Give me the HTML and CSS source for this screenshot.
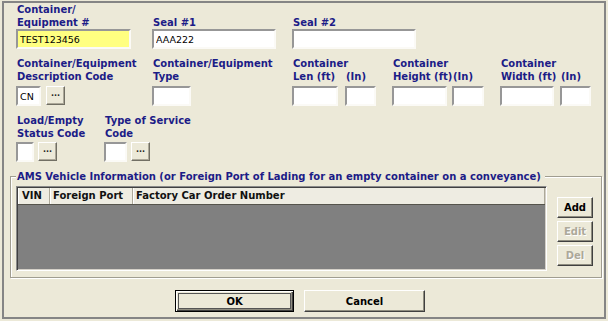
FILE: index.html
```html
<!DOCTYPE html>
<html lang="en">
<head>
    <meta charset="UTF-8">
    <title>Container Details</title>
    <link rel="stylesheet" href="styles.css">
</head>
<body>
    <div class="dialog">
        <div class="row row-1">
            <div class="field w136">
                <label>Container/<br>Equipment #</label>
                <div class="ctl"><input class="txt hilite" style="width: 115px" value="TEST123456"></div>
            </div>
            <div class="field w140">
                <label>Seal #1</label>
                <div class="ctl"><input class="txt" style="width: 124px" value="AAA222"></div>
            </div>
            <div class="field">
                <label>Seal #2</label>
                <div class="ctl"><input class="txt" style="width: 124px" value=""></div>
            </div>
        </div>

        <div class="row row-2">
            <div class="field w136">
                <label>Container/Equipment<br>Description Code</label>
                <div class="ctl">
                    <input class="txt" style="width: 25px" value="CN">
                    <button class="dots">...</button>
                </div>
            </div>
            <div class="field w140">
                <label>Container/Equipment<br>Type</label>
                <div class="ctl"><input class="txt" style="width: 39px" value=""></div>
            </div>
            <div class="field w53">
                <label>Container<br>Len (ft)</label>
                <div class="ctl"><input class="txt" style="width: 46px" value=""></div>
            </div>
            <div class="field w47">
                <label>(In)</label>
                <div class="ctl"><input class="txt" style="width: 31px" value=""></div>
            </div>
            <div class="field w60">
                <label>Container<br>Height (ft)</label>
                <div class="ctl"><input class="txt" style="width: 55px" value=""></div>
            </div>
            <div class="field w48">
                <label>(In)</label>
                <div class="ctl"><input class="txt" style="width: 32px" value=""></div>
            </div>
            <div class="field w60">
                <label>Container<br>Width (ft)</label>
                <div class="ctl"><input class="txt" style="width: 54px" value=""></div>
            </div>
            <div class="field">
                <label>(In)</label>
                <div class="ctl"><input class="txt" style="width: 31px" value=""></div>
            </div>
        </div>

        <div class="row row-3">
            <div class="field w88">
                <label>Load/Empty<br>Status Code</label>
                <div class="ctl">
                    <input class="txt" style="width: 18px" value="">
                    <button class="dots">...</button>
                </div>
            </div>
            <div class="field">
                <label>Type of Service<br>Code</label>
                <div class="ctl">
                    <input class="txt" style="width: 23px" value="">
                    <button class="dots">...</button>
                </div>
            </div>
        </div>

        <fieldset class="group">
            <legend>AMS Vehicle Information (or Foreign Port of Lading for an empty container on a conveyance)</legend>
            <div class="list">
                <div class="list-head">
                    <div class="col col-vin">VIN</div>
                    <div class="col col-port">Foreign Port</div>
                    <div class="col col-order">Factory Car Order Number</div>
                </div>
                <div class="list-body"></div>
            </div>
            <div class="side-btns">
                <button class="btn small">Add</button>
                <button class="btn small" disabled>Edit</button>
                <button class="btn small" disabled>Del</button>
            </div>
        </fieldset>

        <div class="footer">
            <button class="btn wide default">OK</button>
            <button class="btn wide">Cancel</button>
        </div>
    </div>
</body>
</html>
```

FILE: styles.css
```css
body {
    margin: 0;
    background: #ece9d8;
    font-family: "DejaVu Sans", Verdana, sans-serif;
}
.dialog {
    box-sizing: border-box;
    width: 604px;
    height: 318px;
    margin: 1px 0 0 2px;
    border: 2px solid #858585;
    background: #ece9d8;
}
.row {
    display: flex;
    padding-left: 12px;
    margin-top: 8px;
}
.row-1 {
    margin-top: 0;
}
.field {
    display: flex;
    flex-direction: column;
}
.field label {
    height: 26px;
    display: flex;
    align-items: flex-end;
    padding-left: 1px;
    font-size: 10px;
    font-weight: bold;
    line-height: 13px;
    color: #1c1c87;
    white-space: nowrap;
}
.ctl {
    display: flex;
    gap: 5px;
    margin-top: 3px;
}
.row-1 .ctl {
    margin-top: 0;
}
.row-3 .ctl {
    margin-top: 2px;
    gap: 4px;
}
.w136 { width: 136px; }
.w140 { width: 140px; }
.w53 { width: 53px; }
.w47 { width: 47px; }
.w60 { width: 60px; }
.w48 { width: 48px; }
.w88 { width: 88px; }

.txt {
    box-sizing: border-box;
    height: 20px;
    margin: 0;
    padding: 0 0 0 2px;
    border: 2px solid;
    border-color: #979797 #fbfaf6 #fbfaf6 #979797;
    background: #fff;
    font-family: "DejaVu Sans", Verdana, sans-serif;
    font-size: 9.5px;
    color: #000;
    outline: none;
}
.hilite {
    background: #ffff80;
}
.dots {
    box-sizing: border-box;
    width: 19px;
    height: 19px;
    margin: 0;
    padding: 0 0 3px;
    border: 1px solid;
    border-color: #fff #716f64 #716f64 #fff;
    box-shadow: inset -1px -1px 0 #aca899;
    background: #ece9d8;
    font-family: "DejaVu Sans", Verdana, sans-serif;
    font-size: 8px;
    font-weight: bold;
    line-height: 10px;
    color: #222;
}

.group {
    box-sizing: border-box;
    display: flex;
    height: 108px;
    margin: 8px 2px 0 6px;
    padding: 3px 8px 0 5px;
    border: 1px solid #a09d90;
    box-shadow: inset 1px 1px 0 #fff, 1px 1px 0 #fff;
    min-width: 0;
}
.group legend {
    padding: 0 4px 0 1px;
    background: #ece9d8;
    font-size: 10px;
    font-weight: bold;
    line-height: 13px;
    color: #1c1c87;
    white-space: nowrap;
}
.list {
    box-sizing: border-box;
    width: 531px;
    height: 85px;
    border: 1px solid;
    border-color: #8a8a8a #fff #fff #8a8a8a;
    box-shadow: inset 1px 1px 0 #404040, inset -1px -1px 0 #d4d0c8;
    padding: 1px 1px 1px 1px;
    display: flex;
    flex-direction: column;
}
.list-head {
    display: flex;
    height: 16px;
    background: #eeece2;
    border-bottom: 1px solid #55544c;
}
.col {
    box-sizing: border-box;
    padding-left: 3px;
    font-size: 10px;
    font-weight: bold;
    line-height: 16px;
    color: #111;
    border-right: 1px solid #aca899;
    box-shadow: inset 1px 0 0 #fff;
    white-space: nowrap;
}
.col-vin {
    width: 32px;
    padding-left: 4px;
}
.col-port {
    width: 83px;
}
.col-order {
    flex: 1;
}
.list-body {
    flex: 1;
    background: #808080;
}
.side-btns {
    display: flex;
    flex-direction: column;
    gap: 3px;
    margin: 11px 0 0 10px;
}
.btn {
    box-sizing: border-box;
    margin: 0;
    padding: 0;
    border: 1px solid;
    border-color: #fff #404040 #404040 #fff;
    box-shadow: inset -1px -1px 0 #8f8d80;
    background: #ece9d8;
    font-family: "DejaVu Sans", Verdana, sans-serif;
    font-size: 10px;
    font-weight: bold;
    color: #000;
}
.btn:disabled {
    color: #aca899;
    text-shadow: 1px 1px 0 #fff;
}
.small {
    width: 36px;
    height: 21px;
}
.footer {
    display: flex;
    gap: 10px;
    margin-top: 12px;
    padding-left: 171px;
}
.wide {
    width: 121px;
    height: 22px;
}
.default {
    width: 119px;
    border: 1px solid #000;
    box-shadow: inset 1px 1px 0 #fff, inset -1px -1px 0 #404040, inset -2px -2px 0 #8f8d80;
    outline: 1px solid #555;
    outline-offset: -4px;
}
```
